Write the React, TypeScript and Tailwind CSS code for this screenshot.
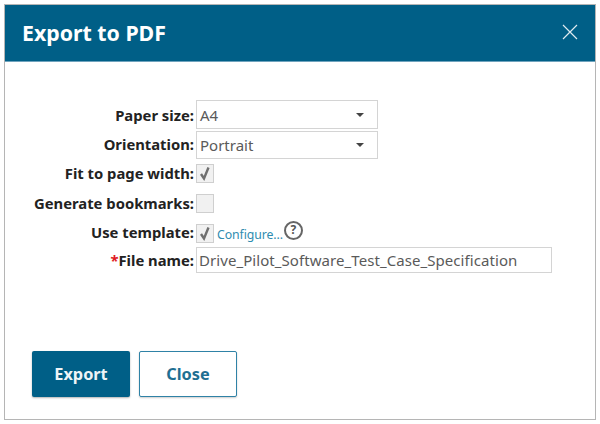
import React from "react";

const font = { fontFamily: '"Noto Sans", "Open Sans", sans-serif' };

function Check({ checked }: { checked?: boolean }) {
  return (
    <span className="flex h-[19px] w-[18px] shrink-0 items-center justify-center border border-[#cfcfcf] bg-[#f1f1f1]">
      {checked && (
        <svg width="14" height="15" viewBox="0 0 14 15" fill="none">
          <path d="M3 8 L6 12.5 L10.5 1.5" stroke="#707070" strokeWidth="2.4" />
        </svg>
      )}
    </span>
  );
}

function Label({ children }: { children: React.ReactNode }) {
  return <span className="w-[190px] shrink-0 pr-px text-right text-[14.8px] font-bold leading-[20px] text-[#222]">{children}</span>;
}

function Select({ value }: { value: string }) {
  return (
    <div className="flex h-full w-[182px] items-center justify-between border border-[#d4d4d4] pl-[3px] pr-[13px] text-[15px] text-[#5a5a5a]">
      <span className="mt-[1px]">{value}</span>
      <span className="h-0 w-0 border-x-[4px] border-t-[4px] border-x-transparent border-t-[#444]" />
    </div>
  );
}

export default function App() {
  return (
    <div className="h-[424px] w-[600px] bg-white pl-[4px] pr-[4px] pt-[4px]" style={font}>
      <div className="flex h-[416px] w-[592px] flex-col border border-[#b5b5b5]">
        <header className="flex h-[57px] shrink-0 items-center justify-between border-b border-[#6fa3bd] bg-[#005f87] pl-[17px] pr-[16px]">
          <h1 className="text-[21.3px] font-bold text-white">Export to PDF</h1>
          <svg width="18" height="18" viewBox="0 0 18 18" fill="none" className="mb-[2px]">
            <path d="M2 2 L16 16 M16 2 L2 16" stroke="#dfeaf0" strokeWidth="1.2" />
          </svg>
        </header>
        <div className="flex flex-1 flex-col pt-[38px]">
          <div className="flex h-[29px] items-center gap-px"><Label>Paper size:</Label><Select value="A4" /></div>
          <div className="mt-[2px] flex h-[28px] items-center gap-px"><Label><span className="relative -top-px">Orientation:</span></Label><Select value="Portrait" /></div>
          <div className="mt-[4px] flex h-[20px] items-center gap-px"><Label>Fit to page width:</Label><Check checked /></div>
          <div className="mt-[10px] flex h-[20px] items-center gap-px"><Label>Generate bookmarks:</Label><Check /></div>
          <div className="mt-[10px] flex h-[20px] items-center gap-px">
            <Label><span className="relative -top-px">Use template:</span></Label>
            <Check checked />
            <span className="ml-[2px] mt-[4px] text-[12.3px] tracking-[-0.1px] text-[#2f8cb0]">Configure...</span>
            <span className="mb-[6px] flex h-[19px] w-[19px] items-center justify-center rounded-full border-2 border-[#666] text-[12px] font-bold text-[#555]">?</span>
          </div>
          <div className="mt-[4px] flex h-[26px] items-center gap-px">
            <Label><span className="text-[#e01b24]">*</span>File name:</Label>
            <div className="flex h-full w-[356px] items-center border border-[#d4d4d4] pl-[2px] text-[15px] tracking-[0.07px] text-[#5a5a5a]">Drive_Pilot_Software_Test_Case_Specification</div>
          </div>
          <div className="mt-[78px] flex gap-[9px] pl-[27px]">
            <button className="h-[46px] w-[98px] rounded-[2px] bg-[#005f87] text-[16.3px] font-bold text-[#eef4f7] shadow-[0_1px_2px_rgba(0,0,0,0.3)]">Export</button>
            <button className="h-[46px] w-[98px] rounded-[2px] border border-[#2f82a6] bg-white text-[16.3px] font-bold text-[#1f6f92] shadow-[0_1px_2px_rgba(0,0,0,0.2)]">Close</button>
          </div>
        </div>
      </div>
    </div>
  );
}
